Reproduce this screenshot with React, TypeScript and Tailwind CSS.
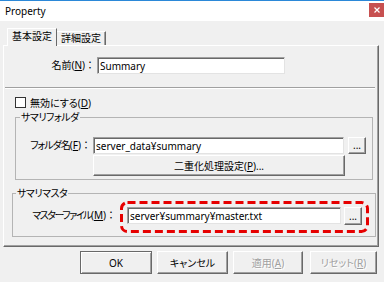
import React from "react";

function Input({ w, h = 17, text }: { w: number; h?: number; text: string }) {
  return (
    <div
      style={{ width: w, height: h }}
      className="shrink-0 bg-white border border-t-[#a0a0a0] border-l-[#a0a0a0] border-r-[#e3e3e3] border-b-[#e3e3e3] shadow-[inset_1px_1px_0_#696969] pl-[2px] flex items-center leading-none whitespace-nowrap overflow-hidden"
    >
      {text}
    </div>
  );
}

function Btn({
  w,
  h,
  children,
  disabled,
  def,
  className = "",
}: {
  w: number;
  h: number;
  children: React.ReactNode;
  disabled?: boolean;
  def?: boolean;
  className?: string;
}) {
  const border = def
    ? "border border-[#696969] shadow-[inset_1px_1px_0_#fff,inset_-1px_-1px_0_#a0a0a0]"
    : "border border-t-white border-l-white border-r-[#696969] border-b-[#696969] shadow-[inset_-1px_-1px_0_#a0a0a0]";
  return (
    <div
      style={{ width: w, height: h }}
      className={`shrink-0 bg-[#f0f0f0] ${border} flex items-center justify-center leading-none ${
        disabled ? "text-[#a0a0a0] [text-shadow:1px_1px_0_#fff]" : ""
      } ${className}`}
    >
      {children}
    </div>
  );
}

const U = ({ c }: { c: string }) => <span className="underline underline-offset-1">{c}</span>;
const Colon = () => <span className="[font-feature-settings:normal]">：</span>;

export default function App() {
  return (
    <div className="w-[384px] h-[282px] bg-[#f0f0f0] overflow-hidden relative flex flex-col text-[10px] text-black [font-family:'Noto_Sans','Noto_Sans_CJK_JP',sans-serif] [font-feature-settings:'palt']">
      {/* title bar */}
      <div className="h-[21px] shrink-0 bg-white border-t border-t-[#2b88d8] flex items-start justify-between">
        <span className="ml-[5px] mt-[3px] leading-[14px]">Property</span>
        <div className="mt-[2px] w-[15px] h-[14px] bg-[#c75050] flex items-center justify-center">
          <svg width="6" height="6" viewBox="0 0 6 6">
            <path d="M0.5 0.5 L5.5 5.5 M5.5 0.5 L0.5 5.5" stroke="#fff" strokeWidth="1.2" />
          </svg>
        </div>
      </div>

      {/* tabs */}
      <div className="mt-[7px] pl-[7px] h-[17px] flex items-end">
        <div className="relative z-10 -mb-px h-[18px] w-[50px] bg-[#f0f0f0] border-t border-l border-r border-t-white border-l-white border-r-[#696969] flex justify-center items-start leading-[12px] pt-[1px]">
          基本設定
        </div>
        <div className="h-[14px] w-[49px] border-t border-r border-t-white border-r-[#696969] shadow-[inset_-1px_0_0_#a0a0a0] flex justify-center items-start leading-[12px]">
          詳細設定
        </div>
      </div>

      {/* panel */}
      <div className="ml-[3px] w-[376px] h-[202px] shrink-0 border border-t-white border-l-white border-r-[#696969] border-b-[#696969] shadow-[inset_-1px_-1px_0_#a0a0a0] flex flex-col">
        {/* name */}
        <div className="mt-[11px] h-[17px] flex items-center">
          <div className="w-[91px] text-right shrink-0 whitespace-nowrap">
            名前(<U c="N" />)<Colon />
          </div>
          <div className="ml-[2px]">
            <Input w={188} text="Summary" />
          </div>
        </div>

        {/* separator */}
        <div className="mt-[13px] ml-[1px] w-[370px] border-t border-b border-t-[#a0a0a0] border-b-white" />

        {/* checkbox */}
        <div className="mt-[8px] h-[11px] flex items-center">
          <div className="ml-[11px] w-[11px] h-[11px] shrink-0 bg-white border border-[#333]" />
          <span className="ml-[4px] leading-none whitespace-nowrap">
            無効にする(<U c="D" />)
          </span>
        </div>

        {/* group 1 */}
        <fieldset className="mt-[2px] ml-[11px] w-[358px] h-[70px] shrink-0 border border-[#b4b4b4] p-0 flex flex-col">
          <legend className="ml-[4px] px-[1px] leading-[14px] tracking-[-0.5px]">サマリフォルダ</legend>
          <div className="mt-[13px] h-[17px] flex items-center">
            <div className="w-[75px] text-right shrink-0 whitespace-nowrap">
              <span className="tracking-[-1px]">フォルダ名</span>(<U c="F" />)<Colon />
            </div>
            <div className="ml-[2px]">
              <Input w={251} text="server_data¥summary" />
            </div>
            <Btn w={18} h={17} className="ml-[4px] items-end pb-[3px]">
              ...
            </Btn>
          </div>
          <Btn w={252} h={21} className="mt-[1px] ml-[77px]">
            二重化処理設定(<U c="P" />)...
          </Btn>
        </fieldset>

        {/* group 2 */}
        <fieldset className="mt-[6px] ml-[8px] w-[364px] h-[51px] shrink-0 border border-[#b4b4b4] p-0 flex flex-col">
          <legend className="ml-[3px] px-[1px] leading-[14px] tracking-[-0.5px]">サマリマスタ</legend>
          <div className="mt-[7px] h-[18px] flex items-start">
            <div className="w-[103px] h-[17px] flex items-center justify-end shrink-0 whitespace-nowrap">
              <span className="tracking-[-1.5px]">マスターファイル</span>(<U c="M" />)<Colon />
            </div>
            <div className="ml-[11px]">
              <Input w={214} text="server¥summary¥master.txt" />
            </div>
            <Btn w={18} h={18} className="ml-[3px] items-end pb-[3px]">
              ...
            </Btn>
          </div>
        </fieldset>
      </div>

      {/* bottom buttons */}
      <div className="mt-[4px] ml-[80px] flex">
        <Btn w={72} h={23} def>
          OK
        </Btn>
        <Btn w={71} h={23} className="ml-[5px]">
          キャンセル
        </Btn>
        <Btn w={70} h={23} className="ml-[5px]" disabled>
          適用(<U c="A" />)
        </Btn>
        <Btn w={67} h={23} className="ml-[7px]" disabled>
          リセット(<U c="R" />)
        </Btn>
      </div>

      {/* red dashed annotation */}
      <svg className="absolute left-[120px] top-[201px]" width="250" height="32" viewBox="0 0 250 32">
        <rect x="1.5" y="1.5" width="246" height="29" rx="6" fill="none" stroke="#e60000" strokeWidth="3" strokeDasharray="8 4" />
      </svg>
    </div>
  );
}
